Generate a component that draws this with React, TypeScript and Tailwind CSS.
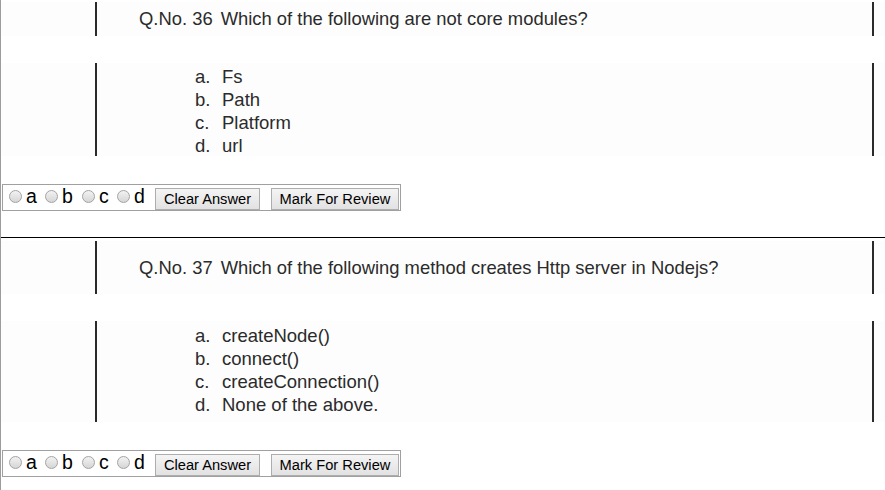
import React from "react";

type Question = {
  no: number;
  text: string;
  options: string[];
  headH: string;
  optH: string;
  optPt: string;
};

const questions: Question[] = [
  {
    no: 36,
    text: "Which of the following are not core modules?",
    options: ["Fs", "Path", "Platform", "url"],
    headH: "h-[34px]",
    optH: "h-[93px]",
    optPt: "pt-[2px]",
  },
  {
    no: 37,
    text: "Which of the following method creates Http server in Nodejs?",
    options: ["createNode()", "connect()", "createConnection()", "None of the above."],
    headH: "h-[53px]",
    optH: "h-[101px]",
    optPt: "pt-[3px]",
  },
];

const letters = ["a", "b", "c", "d"];
// item widths so the radios land where the page draws them
const pitch = ["w-[36px]", "w-[37px]", "w-[35px]", "w-[38px]"];

function Bar() {
  return <div className="w-[2px] self-stretch bg-[#2a2a2a]" />;
}

function Radio() {
  return (
    <span className="inline-block h-[13px] w-[13px] shrink-0 rounded-full border border-[#a3a3a3] bg-linear-to-b from-[#f2f2f2] to-[#d6d6d6]" />
  );
}

function AnswerBar() {
  return (
    <div className="ml-[1px] flex h-[27px] w-fit items-center border border-[#a0a0a0] pl-[6px] pr-[1px] text-black">
      {letters.map((l, i) => (
        <div key={l} className={`mb-[3px] flex items-center ${pitch[i]}`}>
          <Radio />
          <span className="ml-[4px] mt-[2px] text-[19.5px] leading-none">{l}</span>
        </div>
      ))}
      <button className="flex h-[22px] w-[105px] items-center justify-center self-end border border-[#adadad] bg-linear-to-b from-[#f4f4f4] to-[#e2e2e2] text-[14.67px] text-black">
        Clear Answer
      </button>
      <button className="ml-[11px] flex h-[22px] w-[128px] items-center justify-center self-end border border-[#adadad] bg-linear-to-b from-[#f4f4f4] to-[#e2e2e2] text-[14.67px] text-black">
        Mark For Review
      </button>
    </div>
  );
}

function QuestionBlock({ q }: { q: Question }) {
  return (
    <div>
      <div className={`flex ${q.headH} items-center bg-[#fdfdfd]`}>
        <div className="ml-[94px] flex self-stretch">
          <Bar />
        </div>
        <p className="ml-[42px] text-[18.4px] text-[#2b2b2b]">
          Q.No. {q.no}
          <span className="ml-[8px]">{q.text}</span>
        </p>
        <div className="ml-auto mr-[11px] flex self-stretch">
          <Bar />
        </div>
      </div>
      <div className={`mt-[27px] flex ${q.optH} bg-[#fdfdfd]`}>
        <div className="ml-[94px] flex self-stretch">
          <Bar />
        </div>
        <ol className={`ml-[98px] ${q.optPt} text-[18.5px] leading-[23px] text-[#2b2b2b]`}>
          {q.options.map((o, i) => (
            <li key={o} className="flex">
              <span className="w-[27px]">{letters[i]}.</span>
              <span>{o}</span>
            </li>
          ))}
        </ol>
        <div className="ml-auto mr-[11px] flex self-stretch">
          <Bar />
        </div>
      </div>
      <div className="mt-[28px]">
        <AnswerBar />
      </div>
    </div>
  );
}

export default function App() {
  return (
    <div
      className="h-[490px] w-[885px] overflow-hidden border-l border-[#9c9c9c] bg-white"
      style={{ fontFamily: '"Liberation Sans", Arial, sans-serif' }}
    >
      <div className="pt-[2px]">
        <QuestionBlock q={questions[0]} />
      </div>
      <div className="mt-[26px] border-t border-black pt-[3px]">
        <QuestionBlock q={questions[1]} />
      </div>
    </div>
  );
}
